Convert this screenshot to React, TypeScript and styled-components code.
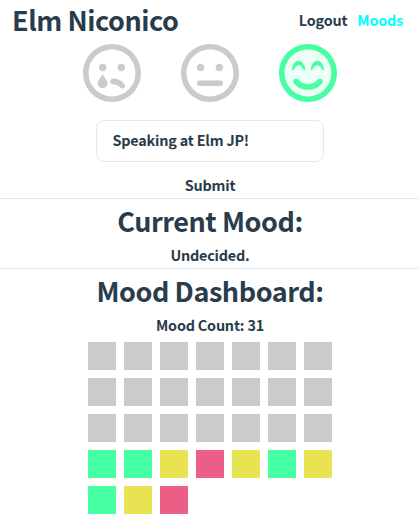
import React from 'react';
import styled, { createGlobalStyle } from 'styled-components';
import { FaRegMeh, FaRegSadTear, FaRegSmileBeam } from 'react-icons/fa';

const GlobalStyle = createGlobalStyle`
  * { box-sizing: border-box; }
  body {
    margin: 0;
    background: #fff;
    color: #293c4b;
    font: 700 14.4px/22px "Noto Sans CJK JP", "Noto Sans", sans-serif;
    letter-spacing: -0.2px;
  }
  h1, h2, p { margin: 0; }
`;

const Page = styled.div`
  height: 521px;
  overflow: hidden;
`;

const Header = styled.header`
  display: flex;
  justify-content: space-between;
  align-items: center;
  height: 42px;
  padding: 0 16px 2px 12px;
`;

const Title = styled.h1`
  font-size: 27px;
  line-height: 40px;
  letter-spacing: -0.45px;
  white-space: nowrap;
`;

const Nav = styled.nav`
  display: flex;
  gap: 10px;
`;

const NavLink = styled.a<{ $active?: boolean }>`
  color: ${(p) => (p.$active ? '#00ffff' : 'inherit')};
`;

const MoodPicker = styled.div`
  display: flex;
  justify-content: center;
  gap: 40px;
  padding-top: 1px;
`;

const MoodButton = styled.button<{ $selected?: boolean }>`
  display: flex;
  width: 58px;
  height: 60px;
  padding: 0;
  border: 0;
  background: ${(p) =>
    p.$selected ? 'radial-gradient(circle, #ecfff6 27px, transparent 28px)' : 'none'};
  color: ${(p) => (p.$selected ? '#47ffa3' : '#cbcbcb')};

  svg {
    width: 58px;
    height: 60px;
  }
`;

const MoodForm = styled.form`
  display: flex;
  flex-direction: column;
  align-items: center;
  padding-top: 17px;
`;

const MessageInput = styled.input`
  width: 228px;
  height: 42px;
  padding: 0 16px 4px;
  border: 1px solid #e2e8f0;
  border-radius: 8px;
  outline: none;
  color: inherit;
  font: inherit;
  letter-spacing: inherit;
`;

const SubmitButton = styled.button`
  height: 24px;
  margin-top: 12px;
  padding: 0 0 2px 1px;
  border: 0;
  background: none;
  color: inherit;
  font: inherit;
  letter-spacing: inherit;
`;

const Section = styled.section`
  border-top: 1px solid #e2e8f0;
  text-align: center;
`;

const Heading = styled.h2`
  padding: 0 0 2px 1px;
  font-size: 27px;
  line-height: 43px;
  letter-spacing: -0.45px;
`;

const Detail = styled.p`
  padding: 0 0 2px 1px;
`;

const MoodGrid = styled.div`
  display: grid;
  grid-template-columns: repeat(7, 28px);
  grid-auto-rows: 28px;
  gap: 8px;
  justify-content: center;
  margin: 4px 0 0 1px;
`;

const moodColors = {
  none: '#cbcbcb',
  happy: '#47ffa3',
  meh: '#e8e352',
  sad: '#ed5e86',
};

type Mood = keyof typeof moodColors;

const MoodCell = styled.div<{ $mood: Mood }>`
  background: ${(p) => moodColors[p.$mood]};
`;

const moods: Mood[] = [
  ...Array<Mood>(21).fill('none'),
  'happy', 'happy', 'meh', 'sad', 'meh', 'happy', 'meh',
  'happy', 'meh', 'sad',
];

export default function App() {
  return (
    <Page>
      <GlobalStyle />
      <Header>
        <Title>Elm Niconico</Title>
        <Nav>
          <NavLink>Logout</NavLink>
          <NavLink $active>Moods</NavLink>
        </Nav>
      </Header>
      <MoodPicker>
        <MoodButton aria-label="Sad"><FaRegSadTear /></MoodButton>
        <MoodButton aria-label="Neutral"><FaRegMeh /></MoodButton>
        <MoodButton aria-label="Happy" $selected><FaRegSmileBeam /></MoodButton>
      </MoodPicker>
      <MoodForm>
        <MessageInput defaultValue="Speaking at Elm JP!" />
        <SubmitButton type="button">Submit</SubmitButton>
      </MoodForm>
      <Section>
        <Heading>Current Mood:</Heading>
        <Detail>Undecided.</Detail>
      </Section>
      <Section>
        <Heading>Mood Dashboard:</Heading>
        <Detail>Mood Count: {moods.length}</Detail>
        <MoodGrid>
          {moods.map((mood, i) => (
            <MoodCell key={i} $mood={mood} />
          ))}
        </MoodGrid>
      </Section>
    </Page>
  );
}
